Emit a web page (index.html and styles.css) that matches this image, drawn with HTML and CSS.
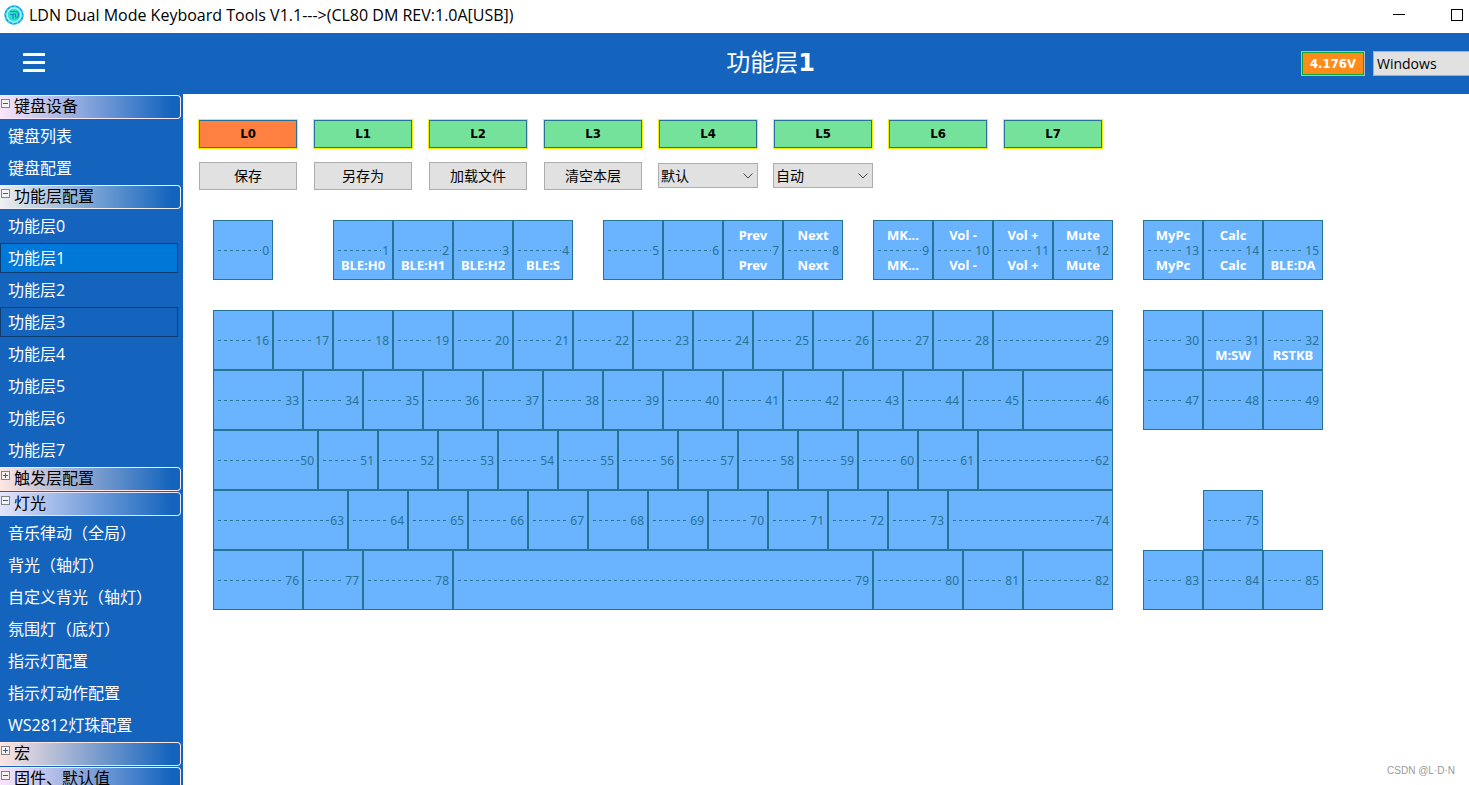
FILE: index.html
```html
<!DOCTYPE html>
<html lang="zh-CN">
<head>
<meta charset="utf-8">
<title>LDN Dual Mode Keyboard Tools</title>
<link rel="stylesheet" href="styles.css">
</head>
<body>
<div class="titlebar">
  <svg class="logo" viewBox="0 0 20 20" aria-hidden="true">
    <circle cx="10" cy="10" r="8.800" fill="#a8f4f4" stroke="#1a9be8" stroke-width="1.800"/>
    <circle cx="10" cy="10" r="8.800" fill="none" stroke="#35dbe6" stroke-width="1.800" stroke-dasharray="2 2.600"/>
    <circle cx="10" cy="10" r="6.200" fill="#2fe0c8"/>
    <path d="M6 6.500h6q2.500 0 2.500 3t-2.500 3.500h-1M6 9.500h3v4.500M9 9h2.500v3" fill="none" stroke="#1789cf" stroke-width="1.200"/>
  </svg>
  <span class="app-title">LDN Dual Mode Keyboard Tools V1.1---&gt;(CL80 DM REV:1.0A[USB])</span>
  <button class="win-btn" aria-label="最小化"><svg viewBox="0 0 12 12"><path d="M0 5.500h12" stroke="#000"/></svg></button>
  <button class="win-btn" aria-label="最大化"><svg viewBox="0 0 12 12"><rect x=".5" y=".5" width="11" height="11" fill="none" stroke="#000"/></svg></button>
</div>
<header class="header">
  <div class="header-left"><button class="menu" aria-label="菜单"><span></span><span></span><span></span></button></div>
  <h1>功能层<b>1</b></h1>
  <output class="volt">4.176V</output>
  <select class="os" aria-label="系统"><option>Windows</option></select>
</header>
<div class="body">
  <nav class="side">
    <button class="group pink"><span class="box"></span>键盘设备</button>
    <div class="items"><button>键盘列表</button><button>键盘配置</button></div>
    <button class="group grey"><span class="box"></span>功能层配置</button>
    <div class="items"><button>功能层0</button><button class="selected">功能层1</button><button>功能层2</button><button class="focus">功能层3</button><button>功能层4</button><button>功能层5</button><button>功能层6</button><button>功能层7</button></div>
    <button class="group rose"><span class="box plus"></span>触发层配置</button>
    <button class="group lilac"><span class="box"></span>灯光</button>
    <div class="items"><button>音乐律动（全局）</button><button>背光（轴灯）</button><button>自定义背光（轴灯）</button><button>氛围灯（底灯）</button><button>指示灯配置</button><button>指示灯动作配置</button><button>WS2812灯珠配置</button></div>
    <button class="group rose"><span class="box plus"></span>宏</button>
    <button class="group pink"><span class="box"></span>固件、默认值</button>
  </nav>
  <main class="main">
    <div class="layers">
      <button class="layer on">L0</button><button class="layer">L1</button><button class="layer">L2</button><button class="layer">L3</button><button class="layer">L4</button><button class="layer">L5</button><button class="layer">L6</button><button class="layer">L7</button>
    </div>
    <div class="tools">
      <button class="tool">保存</button><button class="tool">另存为</button><button class="tool">加载文件</button><button class="tool">清空本层</button>
      <div class="pick"><select aria-label="配置"><option>默认</option></select><svg viewBox="0 0 10 6"><path d="M.5.500 5 5 9.500.500" fill="none" stroke="#444"/></svg></div>
      <div class="pick"><select aria-label="模式"><option>自动</option></select><svg viewBox="0 0 10 6"><path d="M.5.500 5 5 9.500.500" fill="none" stroke="#444"/></svg></div>
    </div>
    <div class="board">
      <div class="row first">
        <button class="key"><i>0</i></button><span class="gap60"></span>
        <button class="key"><i>1</i><b class="lo">BLE:H0</b></button><button class="key"><i>2</i><b class="lo">BLE:H1</b></button><button class="key"><i>3</i><b class="lo">BLE:H2</b></button><button class="key"><i>4</i><b class="lo">BLE:S</b></button><span class="gap30"></span>
        <button class="key"><i>5</i></button><button class="key"><i>6</i></button><button class="key"><b>Prev</b><i>7</i><b class="lo">Prev</b></button><button class="key"><b>Next</b><i>8</i><b class="lo">Next</b></button><span class="gap30"></span>
        <button class="key"><b>MK...</b><i>9</i><b class="lo">MK...</b></button><button class="key"><b>Vol -</b><i>10</i><b class="lo">Vol -</b></button><button class="key"><b>Vol +</b><i>11</i><b class="lo">Vol +</b></button><button class="key"><b>Mute</b><i>12</i><b class="lo">Mute</b></button><span class="gap30"></span>
        <button class="key"><b>MyPc</b><i>13</i><b class="lo">MyPc</b></button><button class="key"><b>Calc</b><i>14</i><b class="lo">Calc</b></button><button class="key"><i>15</i><b class="lo">BLE:DA</b></button>
      </div>
      <div class="row">
        <button class="key"><i>16</i></button><button class="key"><i>17</i></button><button class="key"><i>18</i></button><button class="key"><i>19</i></button><button class="key"><i>20</i></button><button class="key"><i>21</i></button><button class="key"><i>22</i></button><button class="key"><i>23</i></button><button class="key"><i>24</i></button><button class="key"><i>25</i></button><button class="key"><i>26</i></button><button class="key"><i>27</i></button><button class="key"><i>28</i></button><button class="key w120"><i>29</i></button><span class="gap30"></span>
        <button class="key"><i>30</i></button><button class="key"><i>31</i><b class="lo">M:SW</b></button><button class="key"><i>32</i><b class="lo">RSTKB</b></button>
      </div>
      <div class="row">
        <button class="key w90"><i>33</i></button><button class="key"><i>34</i></button><button class="key"><i>35</i></button><button class="key"><i>36</i></button><button class="key"><i>37</i></button><button class="key"><i>38</i></button><button class="key"><i>39</i></button><button class="key"><i>40</i></button><button class="key"><i>41</i></button><button class="key"><i>42</i></button><button class="key"><i>43</i></button><button class="key"><i>44</i></button><button class="key"><i>45</i></button><button class="key w90"><i>46</i></button><span class="gap30"></span>
        <button class="key"><i>47</i></button><button class="key"><i>48</i></button><button class="key"><i>49</i></button>
      </div>
      <div class="row">
        <button class="key w105"><i>50</i></button><button class="key"><i>51</i></button><button class="key"><i>52</i></button><button class="key"><i>53</i></button><button class="key"><i>54</i></button><button class="key"><i>55</i></button><button class="key"><i>56</i></button><button class="key"><i>57</i></button><button class="key"><i>58</i></button><button class="key"><i>59</i></button><button class="key"><i>60</i></button><button class="key"><i>61</i></button><button class="key w135"><i>62</i></button>
      </div>
      <div class="row">
        <button class="key w135"><i>63</i></button><button class="key"><i>64</i></button><button class="key"><i>65</i></button><button class="key"><i>66</i></button><button class="key"><i>67</i></button><button class="key"><i>68</i></button><button class="key"><i>69</i></button><button class="key"><i>70</i></button><button class="key"><i>71</i></button><button class="key"><i>72</i></button><button class="key"><i>73</i></button><button class="key w165"><i>74</i></button><span class="gap30"></span><span class="gap60"></span>
        <button class="key"><i>75</i></button>
      </div>
      <div class="row">
        <button class="key w90"><i>76</i></button><button class="key"><i>77</i></button><button class="key w90"><i>78</i></button><button class="key w420"><i>79</i></button><button class="key w90"><i>80</i></button><button class="key"><i>81</i></button><button class="key w90"><i>82</i></button><span class="gap30"></span>
        <button class="key"><i>83</i></button><button class="key"><i>84</i></button><button class="key"><i>85</i></button>
      </div>
    </div>
    <footer class="mark">CSDN @L·D·N</footer>
  </main>
</div>
</body>
</html>
```
FILE: styles.css
```css
* { box-sizing: border-box; }

body {
  margin: 0;
  height: 100vh;
  display: flex;
  flex-direction: column;
  overflow: hidden;
  background: #fff;
  color: #000;
  font-family: "Open Sans", "Noto Sans CJK SC", sans-serif;
}

button, select {
  margin: 0;
  padding: 0;
  border: 0;
  border-radius: 0;
  background: none;
  color: inherit;
  font: inherit;
  appearance: none;
}

/* window title bar */
.titlebar {
  flex: none;
  height: 33px;
  padding: 0 6px 4px 4px;
  display: flex;
  align-items: center;
}
.logo { width: 20px; height: 20px; margin-right: 5px; }
.app-title { flex: 1; font-size: 16px; line-height: 20px; white-space: nowrap; }
.win-btn { width: 12px; height: 12px; margin-left: 46px; display: flex; }
.win-btn svg { width: 12px; height: 12px; }

/* blue header */
.header {
  flex: none;
  height: 61px;
  display: flex;
  align-items: center;
  background: #1464be;
  color: #fff;
}
.header-left { width: 240px; padding: 0 0 2px 23px; }
.menu { display: flex; flex-direction: column; gap: 5px; }
.menu span { width: 22px; height: 3px; background: #fff; }
.header h1 {
  flex: 1;
  margin: 0;
  padding-bottom: 3px;
  text-align: center;
  font: 400 24px/32px "Noto Sans CJK SC", sans-serif;
}
.header h1 b { font-family: "DejaVu Sans", sans-serif; }
.volt {
  width: 64px;
  height: 25px;
  margin-right: 8px;
  border: 1px solid #a9c4b0;
  outline: 1px solid #10a830;
  outline-offset: -2px;
  background: #ff8c1a;
  text-align: center;
  font: bold 13px/23px "DejaVu Sans Condensed", "Noto Sans", sans-serif;
}
.os {
  width: 96px;
  height: 25px;
  padding-left: 3px;
  border: 1px solid #adadad;
  border-right: 0;
  background: #e1e1e1;
  color: #000;
  font-size: 14px;
}

.body { flex: 1; min-height: 0; display: flex; }

/* sidebar */
.side {
  flex: none;
  width: 183px;
  padding-top: 1px;
  overflow: hidden;
  background: #1464be;
  font-size: 16px;
}
.group {
  display: flex;
  width: 181px;
  height: 24px;
  margin-bottom: 1px;
  padding-left: 1px;
  border: 1px solid var(--tint);
  border-left: 0;
  border-radius: 0 4px 4px 0;
  background: linear-gradient(90deg, var(--tint), #1464be 95%);
  line-height: 20px;
  text-align: left;
}
.pink { --tint: #fbe6fb; }
.grey { --tint: #f0f0f0; }
.rose { --tint: #ffe6e2; }
.lilac { --tint: #e4e4fc; }
.box {
  width: 9px;
  height: 9px;
  margin: 3px 4px 0 0;
  border: 1px solid #848484;
  background: linear-gradient(#3c5a96, #3c5a96) center / 5px 1px no-repeat, #f4f4f4;
}
.plus {
  background: linear-gradient(#3c5a96, #3c5a96) center / 5px 1px no-repeat,
    linear-gradient(#3c5a96, #3c5a96) center / 1px 5px no-repeat, #f4f4f4;
}
.items { padding-top: 1px; color: #fff; }
.items button {
  display: block;
  width: 178px;
  height: 30px;
  margin-bottom: 2px;
  padding-left: 7px;
  border: 1px solid transparent;
  line-height: 28px;
  text-align: left;
}
.items .selected { background: #0078d7; border-color: #0c3c70; }
.items .focus { border-color: #0c3c70; }

/* work area */
.main {
  flex: 1;
  min-width: 0;
  padding: 25px 14px 5px 15px;
  display: flex;
  flex-direction: column;
}
.layers, .tools { display: grid; grid-template-columns: repeat(8, 100px); gap: 15px; }
.layer {
  height: 30px;
  border: 1px solid #f0f000;
  outline: 1px solid #267396;
  outline-offset: -2px;
  background: #74e29a;
  font: bold 13px/28px "DejaVu Sans Condensed", "Noto Sans", sans-serif;
}
.layer.on { background: #ff8040; }
.tools { margin-top: 13px; align-items: start; font-size: 14px; }
.tool {
  height: 28px;
  margin: 0 1px;
  padding-bottom: 2px;
  border: 1px solid #adadad;
  background: #e1e1e1;
}
.pick { position: relative; height: 25px; margin-top: 1px; }
.pick select {
  width: 100%;
  height: 25px;
  padding-left: 2px;
  border: 1px solid #adadad;
  background: #e1e1e1;
}
.pick svg { position: absolute; right: 5px; top: 10px; width: 10px; height: 6px; pointer-events: none; }

/* keyboard */
.board { padding: 30px 0 0 15px; }
.row { display: flex; }
.first { margin-bottom: 30px; }
.gap30 { flex: none; width: 30px; }
.gap60 { flex: none; width: 60px; }
.key {
  flex: none;
  width: 60px;
  height: 60px;
  border: 1px solid #267396;
  padding: 0 3px;
  display: grid;
  grid-template-rows: 15px 15px 15px;
  grid-template-columns: 100%;
  align-content: center;
  background: #6ab3ff;
  color: #fff;
  font: 13px/15px "Noto Sans", sans-serif;
}
.key b { grid-row: 1; }
.key .lo { grid-row: 3; }
.key i {
  grid-row: 2;
  display: flex;
  align-items: center;
  gap: 1px;
  padding-left: 1px;
  color: #267396;
  font-size: 12px;
  font-style: normal;
}
.key i::before {
  content: "";
  flex: 1;
  height: 1px;
  background: repeating-linear-gradient(90deg, #267396 0 3px, transparent 3px 6px);
}
.w90 { width: 90px; }
.w105 { width: 105px; }
.w120 { width: 120px; }
.w135 { width: 135px; }
.w165 { width: 165px; }
.w420 { width: 420px; }

.mark { margin-top: auto; text-align: right; color: #999; font: 10px/18px "Liberation Sans", sans-serif; }
```
